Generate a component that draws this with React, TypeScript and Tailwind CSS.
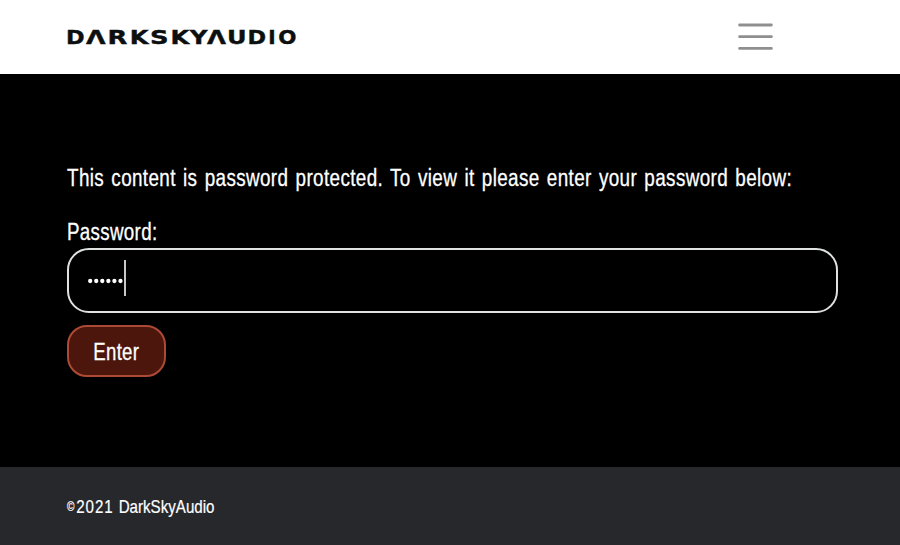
const wordmark = [
  { glyph: "D", x: 65.9, width: 18.6 },
  { glyph: "Λ", x: 85.9, width: 19.6 },
  { glyph: "R", x: 107.6, width: 19.8 },
  { glyph: "K", x: 129.8, width: 18.8 },
  { glyph: "S", x: 150, width: 18.6 },
  { glyph: "K", x: 170.4, width: 18.8 },
  { glyph: "Y", x: 189.8, width: 17.8 },
  { glyph: "Λ", x: 206.9, width: 19 },
  { glyph: "U", x: 227, width: 19.6 },
  { glyph: "D", x: 247.6, width: 18.6 },
  { glyph: "I", x: 268.2, width: 7.4 },
  { glyph: "O", x: 278.2, width: 18.2 },
];

function Wordmark() {
  return (
    <svg className="h-[74px] w-[240px]" viewBox="60 0 240 74" role="img" aria-label="DarkSkyAudio">
      {wordmark.map((l, i) => (
        <text
          key={i}
          x={l.x}
          y={43.5}
          textLength={l.width}
          lengthAdjust="spacingAndGlyphs"
          fill="#0c0f0f"
          stroke="#0c0f0f"
          strokeWidth={0.4}
          className="font-['DejaVu_Sans',sans-serif] text-[19.2px] font-bold"
        >
          {l.glyph}
        </text>
      ))}
    </svg>
  );
}

export default function App() {
  return (
    <div className="flex h-[545px] w-[900px] flex-col overflow-hidden bg-black font-['Liberation_Sans',sans-serif] text-white">
      <header className="flex h-[74px] items-center justify-between bg-white pl-[60px] pr-[127px]">
        <Wordmark />
        <button aria-label="Menu" className="w-[35px]">
          <svg viewBox="0 0 35 28" className="h-7 w-[35px]" stroke="#8f8f8f" strokeWidth="2.8" strokeLinecap="round">
            <path d="M1.6 2H33.4M1.6 13.7H33.4M1.6 25.4H33.4" />
          </svg>
        </button>
      </header>
      <main className="flex h-[393px] flex-col items-start pl-[67px] pt-[88px]">
        <p className="h-8 origin-left scale-x-[0.82] whitespace-nowrap text-[23px] leading-8 tracking-[0.45px] [-webkit-text-stroke:0.3px_white] [word-spacing:2px]">
          This content is password protected. To view it please enter your password below:
        </p>
        <label className="mt-[22px] h-8 origin-left scale-x-[0.815] whitespace-nowrap text-[23px] leading-8 tracking-[0.4px] [-webkit-text-stroke:0.3px_white]">
          Password:
        </label>
        <div className="flex h-[65px] w-[771px] items-center rounded-[22px] border-2 border-[#e0e2e2] pl-[19px]">
          <svg viewBox="0 0 36 6" className="h-1.5 w-9" fill="white">
            {[0, 1, 2, 3, 4, 5].map((i) => (
              <circle key={i} cx={2.2 + i * 6.05} cy={3} r={2.15} />
            ))}
          </svg>
          <span className="mb-[5px] h-9 w-[2px] bg-[#c8c8c8]" />
        </div>
        <button className="mt-3 flex h-[52px] w-[99px] items-center justify-center rounded-[20px] border-2 border-[#ad4a36] bg-[#4c160c]">
          <span className="scale-x-[0.81] pt-0.5 text-[23px] tracking-[0.3px] [-webkit-text-stroke:0.3px_white]">
            Enter
          </span>
        </button>
      </main>
      <footer className="flex h-[78px] items-center bg-[#27282c] pl-[67px] text-[18px]">
        <p className="flex origin-left scale-x-[0.84] items-center whitespace-pre pt-0.5 [-webkit-text-stroke:0.2px_white]">
          <span className="w-[11px] text-[12px]">©</span>
          <span className="tracking-[1.1px]">2021 </span>
          <span>DarkSkyAudio</span>
        </p>
      </footer>
    </div>
  );
}
